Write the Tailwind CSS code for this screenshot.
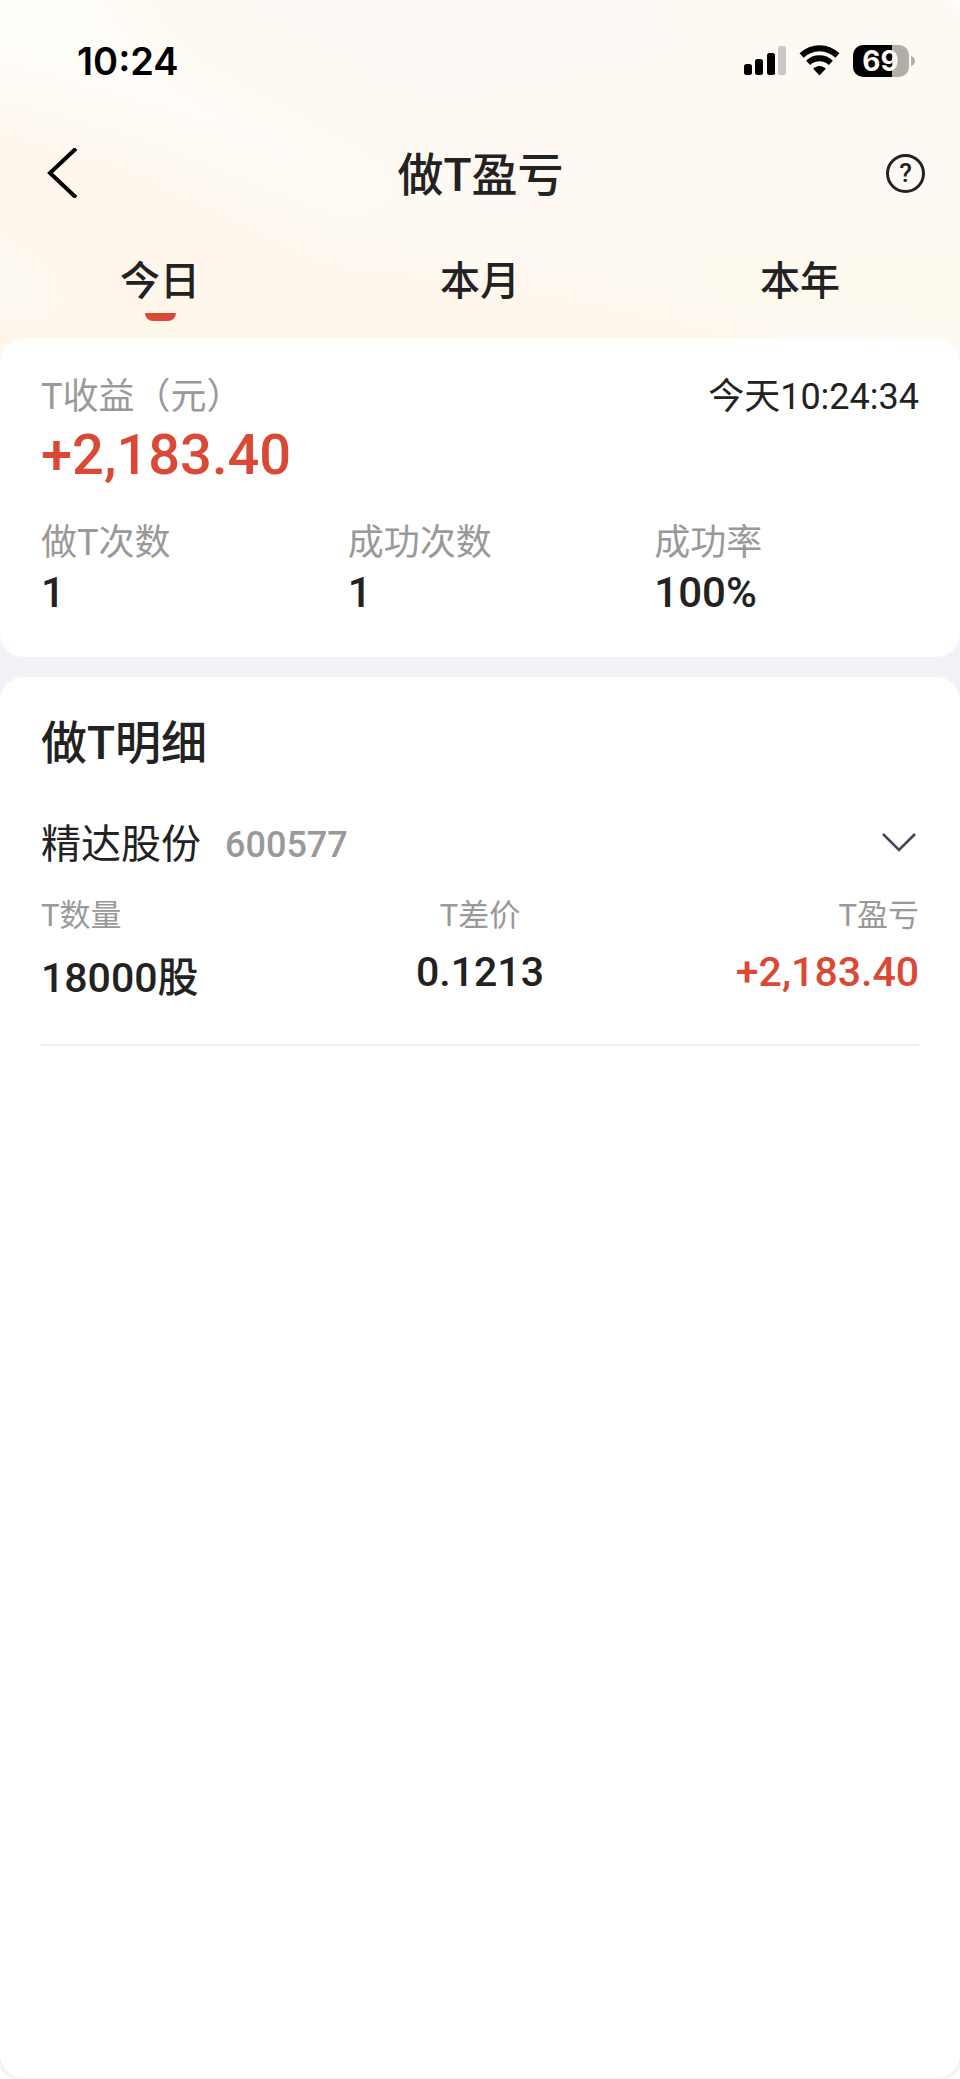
<!DOCTYPE html>
<html lang="zh-CN">
<head>
    <meta charset="UTF-8" />
    <meta name="viewport" content="width=device-width, initial-scale=1.0">
    <title>做T盈亏</title>
    <script src="https://cdn.jsdelivr.net/npm/@tailwindcss/browser@4"></script>
</head>
<body class="bg-white font-['Roboto','Noto_Sans_CJK_SC',sans-serif] text-[#222222]">
    <div class="min-h-screen flex flex-col bg-[#f2f3f8] rounded-2xl overflow-hidden">
        <header class="relative overflow-hidden bg-[#fef9f2] pt-[37px] pb-[42px]">
            <!-- Soft diagonal streaks behind the header -->
            <svg class="absolute inset-0 w-full h-full" viewBox="0 0 960 363" preserveAspectRatio="none" aria-hidden="true">
                <defs>
                    <filter id="soft" x="-30%" y="-30%" width="160%" height="160%">
                        <feGaussianBlur stdDeviation="20" />
                    </filter>
                </defs>
                <g filter="url(#soft)">
                    <path d="M-60 110L120 160L330 260L560 290L760 335L760 420H-60Z" fill="#fff6ec" />
                    <path d="M-60 -60H90L170 60L400 190L350 205L160 130L-60 70Z" fill="#fffdf8" />
                    <path d="M-60 215L30 250L80 320L-60 320Z" fill="#fdf9f2" />
                    <path d="M110 -60H620L700 60L420 110Z" fill="#fdf8f3" />
                    <path d="M600 250L1020 250V330L740 305Z" fill="#fef9ee" />
                </g>
            </svg>

            <div class="relative flex items-center justify-between h-12 pl-[77px] pr-11">
                <span class="font-['Inter',sans-serif] font-semibold text-[38px] leading-[48px] text-black">10:24</span>
                <div class="flex items-center gap-3">
                    <svg class="w-[43px] h-8" viewBox="0 0 43 32" role="img" aria-label="信号">
                        <rect x="0" y="19" width="8" height="11" rx="2.5" />
                        <rect x="11" y="14" width="8" height="16" rx="2.5" />
                        <rect x="23" y="8" width="8" height="22" rx="2.5" />
                        <rect x="34" y="1" width="8" height="29" rx="2.5" fill="#cbc8c3" />
                    </svg>
                    <svg class="w-[42px] h-8" viewBox="0 0 42 32" role="img" aria-label="Wi-Fi">
                        <g fill="none" stroke="#000" stroke-width="6">
                            <path d="M2.600 10.500C13 0.700 28 0.700 38.400 10.500" />
                            <path d="M9.200 17.800C15.500 11.800 25.500 11.800 31.800 17.800" />
                        </g>
                        <path d="M14.200 23.800C18 20.200 23 20.200 26.800 23.800L20.500 30.400Z" />
                    </svg>
                    <svg class="w-[63px] h-8" viewBox="0 0 63 32" role="img" aria-label="电量 69%">
                        <path d="M10 0H39V32H10A10 10 0 0 1 0 22V10A10 10 0 0 1 10 0Z" />
                        <path d="M39 0H46A10 10 0 0 1 56 10V22A10 10 0 0 1 46 32H39Z" fill="#b1aeaa" />
                        <path d="M58 11Q62 12.500 62 16Q62 19.500 58 21Z" fill="#b1aeaa" />
                        <text x="27.500" y="26" text-anchor="middle" fill="#fffaf2" class="font-['Inter',sans-serif] font-bold text-[28px]">69</text>
                    </svg>
                </div>
            </div>

            <div class="relative flex items-center justify-between h-16 mt-14 pl-[46px] pr-[35px]">
                <button type="button" aria-label="返回" class="w-[29px] cursor-pointer">
                    <svg class="w-8 h-[50px]" viewBox="0 0 32 50" fill="none" stroke="#000" stroke-width="4">
                        <path d="M30 0.500L4 25L30 49.500" />
                    </svg>
                </button>
                <h1 class="pt-1 font-medium text-[46px] leading-[60px]">做T盈亏</h1>
                <button type="button" aria-label="帮助" class="w-[39px] h-[39px] rounded-full border-3 border-[#222222] flex items-center justify-center font-medium text-[26px] leading-none cursor-pointer">?</button>
            </div>

            <nav class="relative grid grid-cols-3 mt-[53px] font-medium text-[40px] leading-[48px] text-center">
                <a href="#today" aria-current="page" class="flex flex-col items-center gap-[7px]">
                    今日
                    <span class="w-[31px] h-2 rounded-b-lg bg-[#da4936]"></span>
                </a>
                <a href="#month">本月</a>
                <a href="#year">本年</a>
            </nav>
        </header>

        <main class="relative -mt-6 grow flex flex-col gap-5 pb-px">
            <section class="bg-white rounded-3xl px-[41px] pt-9 pb-10">
                <div class="flex items-center justify-between text-[36px] leading-[44px]">
                    <h2 class="text-[#999999]">T收益（元）</h2>
                    <time>今天10:24:34</time>
                </div>
                <p class="mt-1 font-medium text-[56px] leading-[64px] text-[#da4936]">+2,183.40</p>
                <dl class="grid grid-cols-3 mt-[34px]">
                    <div>
                        <dt class="text-[36px] leading-[44px] text-[#999999]">做T次数</dt>
                        <dd class="mt-1 font-medium text-[42px] leading-[48px]">1</dd>
                    </div>
                    <div class="pl-[14px]">
                        <dt class="text-[36px] leading-[44px] text-[#999999]">成功次数</dt>
                        <dd class="mt-1 font-medium text-[42px] leading-[48px]">1</dd>
                    </div>
                    <div class="pl-7">
                        <dt class="text-[36px] leading-[44px] text-[#999999]">成功率</dt>
                        <dd class="mt-1 font-medium text-[42px] leading-[48px]">100%</dd>
                    </div>
                </dl>
            </section>

            <section class="grow bg-white rounded-3xl px-[41px] pt-[42px]">
                <h2 class="font-medium text-[46px] leading-[48px]">做T明细</h2>
                <article class="mt-[54px] pb-10 border-b-2 border-[#eeeeee]">
                    <div class="flex items-center justify-between">
                        <h3 class="flex items-center gap-6 text-[40px] leading-[48px]">
                            精达股份
                            <span class="font-medium text-[36px] leading-[44px] text-[#999999]">600577</span>
                        </h3>
                        <button type="button" aria-label="展开" class="pr-0.5 cursor-pointer">
                            <svg class="w-9 h-6" viewBox="0 0 36 24" fill="none" stroke="#45455a" stroke-width="2.6">
                                <path d="M2 1L18 17L34 1" />
                            </svg>
                        </button>
                    </div>
                    <table class="w-full mt-[29px] table-fixed">
                        <thead>
                            <tr class="text-[31px] leading-9 text-[#999999]">
                                <th class="font-normal text-left">T数量</th>
                                <th class="font-normal text-center">T差价</th>
                                <th class="font-normal text-right">T盈亏</th>
                            </tr>
                        </thead>
                        <tbody>
                            <tr class="font-medium text-[41px] leading-[48px] align-top">
                                <td class="pt-5 pb-0.5 text-left">18000股</td>
                                <td class="pt-[14px] text-center">0.1213</td>
                                <td class="pt-[14px] text-right text-[#da4936]">+2,183.40</td>
                            </tr>
                        </tbody>
                    </table>
                </article>
            </section>
        </main>
    </div>
</body>
</html>
